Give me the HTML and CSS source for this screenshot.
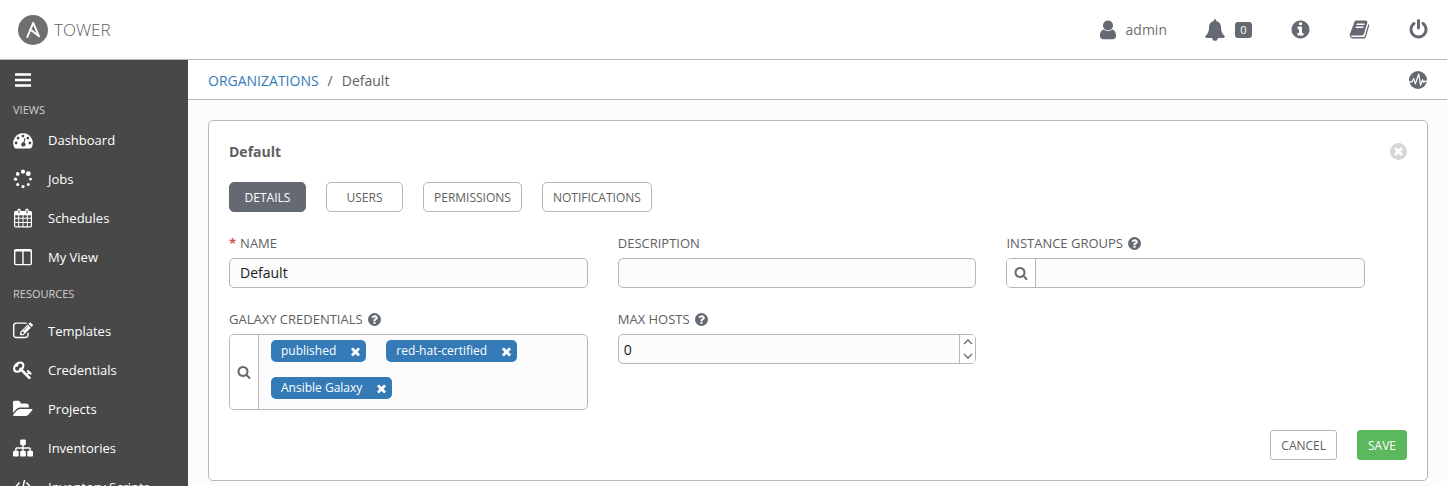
FILE: index.html
```html
<!DOCTYPE html>
<html lang="en">
<head>
<meta charset="utf-8">
<title>Tower - Organizations</title>
<link rel="stylesheet" href="styles.css">
</head>
<body>
<svg class="sprite" aria-hidden="true">
  <symbol id="search" viewBox="0 0 1792 1792"><path d="M1216 832q0-185-131.500-316.500t-316.500-131.500-316.500 131.500-131.500 316.500 131.500 316.500 316.500 131.500 316.500-131.500 131.500-316.500zm512 832q0 52-38 90t-90 38q-54 0-90-38l-343-342q-179 124-399 124-143 0-273.500-55.500t-225-150-150-225-55.500-273.500 55.500-273.500 150-225 225-150 273.500-55.500 273.500 55.500 225 150 150 225 55.500 273.500q0 220-124 399l343 343q37 37 37 90z"/></symbol>
  <symbol id="help" viewBox="0 0 1792 1792"><path d="M1024 1376v-192q0-14-9-23t-23-9h-192q-14 0-23 9t-9 23v192q0 14 9 23t23 9h192q14 0 23-9t9-23zm256-672q0-88-55.500-163t-138.500-116-170-41q-243 0-371 213-15 24 8 42l132 100q7 6 19 6 16 0 25-12 53-68 86-92 34-24 86-24 48 0 85.500 26t37.500 59q0 38-20 61t-68 45q-63 28-115.500 86.500t-52.500 125.500v36q0 14 9 23t23 9h192q14 0 23-9t9-23q0-19 21.500-49.500t54.500-49.500q32-18 49-28.500t46-35 44.500-48 28-60.500 12.500-81zm384 192q0 209-103 385.500t-279.500 279.500-385.500 103-385.500-103-279.500-279.500-103-385.500 103-385.500 279.500-279.500 385.500-103 385.500 103 279.500 279.500 103 385.500z"/></symbol>
  <symbol id="times" viewBox="0 0 1792 1792"><path d="M1490 1322q0 40-28 68l-136 136q-28 28-68 28t-68-28l-294-294-294 294q-28 28-68 28t-68-28l-136-136q-28-28-28-68t28-68l294-294-294-294q-28-28-28-68t28-68l136-136q28-28 68-28t68 28l294 294 294-294q28-28 68-28t68 28l136 136q28 28 28 68t-28 68l-294 294 294 294q28 28 28 68z"/></symbol>
</svg>

<header class="topbar">
  <a class="brand" href="#">
    <svg class="brand-mark" viewBox="0 0 30 30"><circle cx="15" cy="15" r="15" fill="#6f6f6f"/><path d="M9.300 22 15.200 7.800 21 21.300 12 14.300" fill="none" stroke="#fff" stroke-width="1.900" stroke-linejoin="round" stroke-linecap="round"/></svg>
    <span>TOWER</span>
  </a>
  <nav class="tools" aria-label="Account">
    <a class="tool" href="#">
      <svg class="icon-user" viewBox="0 0 16 20"><circle cx="8" cy="5.500" r="5"/><path d="M4 9.600a6.300 6.300 0 0 0 8 0c3 .4 4 3.400 4 6.200 0 2.200-1.200 3.500-3.200 3.500H3.200C1.200 19.300 0 18 0 15.800c0-2.800 1-5.800 4-6.200z"/></svg>
      <span>admin</span>
    </a>
    <button class="tool" type="button" aria-label="Notifications">
      <svg class="icon-bell" viewBox="0 0 20 22"><path d="M10 .3c.8 0 1.300.6 1.200 1.300l-.1.500c3.200.6 4.900 3.100 4.900 6 0 4.700 1.300 7 3.800 9.100 0 1-.6 1.700-1.600 1.700h-5.400a2.800 2.800 0 0 1-5.600 0H1.800c-1 0-1.600-.7-1.600-1.700C2.700 15.100 4 12.800 4 8.100c0-2.900 1.700-5.400 4.900-6l-.1-.5C8.700.9 9.200.3 10 .3z"/></svg>
      <span class="count">0</span>
    </button>
    <a class="tool" href="#" aria-label="About">
      <svg class="icon-21" viewBox="0 0 1792 1792"><path d="M1152 1376v-160q0-14-9-23t-23-9h-96v-512q0-14-9-23t-23-9h-320q-14 0-23 9t-9 23v160q0 14 9 23t23 9h96v320h-96q-14 0-23 9t-9 23v160q0 14 9 23t23 9h448q14 0 23-9t9-23zm-128-896v-160q0-14-9-23t-23-9h-192q-14 0-23 9t-9 23v160q0 14 9 23t23 9h192q14 0 23-9t9-23zm640 416q0 209-103 385.500t-279.500 279.500-385.500 103-385.500-103-279.500-279.500-103-385.500 103-385.500 279.500-279.500 385.500-103 385.500 103 279.500 279.500 103 385.500z"/></svg>
    </a>
    <a class="tool" href="#" aria-label="Documentation">
      <svg class="icon-21" viewBox="0 0 1792 1792"><path d="M1703 478q40 57 18 129l-275 906q-19 64-76.500 107.500t-122.500 43.500h-923q-77 0-148.500-53.500t-99.500-131.500q-24-67-2-127 0-4 3-27t4-37q1-8-3-21.500t-3-19.500q2-11 8-21t16.500-23.500 16.500-23.500q23-38 45-91.500t30-91.500q3-10 .5-30t-.5-28q3-11 17-28t17-23q21-36 42-92t25-90q1-9-2.500-32t.5-28q4-13 22-30.500t22-22.500q19-26 42.500-84.500t27.500-96.500q1-8-3-25.500t-2-26.500q2-8 9-18t18-23 17-21q8-12 16.500-30.500t15-35 16-36 19.500-32 26.500-23.500 36-11.500 47.500 5.500l-1 3q38-9 51-9h761q74 0 114 56t18 130l-274 906q-36 119-71.500 153.500t-128.500 34.500h-869q-27 0-38 15-11 16-1 43 24 70 144 70h923q29 0 56-15.500t35-41.500l300-987q7-22 5-57 38 15 59 43zm-1064 2q-4 13 2 22.500t20 9.500h608q13 0 25.500-9.500t16.500-22.500l21-64q4-13-2-22.500t-20-9.500h-608q-13 0-25.500 9.500t-16.500 22.500zm-83 256q-4 13 2 22.500t20 9.500h608q13 0 25.500-9.500t16.500-22.500l21-64q4-13-2-22.500t-20-9.500h-608q-13 0-25.500 9.500t-16.500 22.500z"/></svg>
    </a>
    <button class="tool" type="button" aria-label="Log out">
      <svg class="icon-21" viewBox="0 0 1792 1792"><path d="M1664 896q0 156-61 298t-164 245-245 164-298 61-298-61-245-164-164-245-61-298q0-182 80.500-343t226.500-270q43-32 95.500-25t83.500 50q32 42 24.500 94.500t-49.500 84.500q-98 74-151.500 181t-53.500 228q0 104 40.500 198.500t109.500 163.500 163.500 109.500 198.500 40.500 198.500-40.500 163.500-109.500 109.500-163.500 40.500-198.500q0-121-53.500-228t-151.500-181q-42-32-49.500-84.500t24.500-94.500q31-43 84-50t95 25q146 109 226.500 270t80.500 343zm-640-768v640q0 52-38 90t-90 38-90-38-38-90v-640q0-52 38-90t90-38 90 38 38 90z"/></svg>
    </button>
  </nav>
</header>

<div class="shell">
  <nav class="sidebar" aria-label="Main">
    <button class="burger" type="button" aria-label="Toggle menu">
      <svg viewBox="0 0 20 20"><path d="M2 4.500h16M2 10h16M2 15.500h16" stroke="#fff" stroke-width="2.600"/></svg>
    </button>
    <h2 class="side-heading side-heading-first">VIEWS</h2>
    <a class="side-link" href="#"><svg viewBox="0 0 20 20"><path fill-rule="evenodd" d="M10 3.300a9.700 9.700 0 0 1 8.300 14.800c-.2.300-.5.500-.9.500H2.600c-.4 0-.7-.2-.9-.5A9.700 9.700 0 0 1 10 3.300zM10 4.700a1.400 1.400 0 1 0 0 2.800 1.400 1.400 0 0 0 0-2.800zM5.100 6.700a1.400 1.400 0 1 0 0 2.800 1.400 1.400 0 0 0 0-2.800zM3.100 11.600a1.400 1.400 0 1 0 0 2.800 1.400 1.400 0 0 0 0-2.800zM14.900 6.700a1.400 1.400 0 1 0 0 2.800 1.400 1.400 0 0 0 0-2.800zM16.900 11.600a1.400 1.400 0 1 0 0 2.800 1.400 1.400 0 0 0 0-2.800zM11.400 8.300l-1 3.900a2.200 2.200 0 1 0 1.100.3l1-3.900z"/></svg>Dashboard</a>
    <a class="side-link" href="#"><svg viewBox="0 0 20 20"><circle cx="10" cy="2.700" r="2.100"/><circle cx="15.300" cy="4.700" r="2.400"/><circle cx="17.500" cy="10.200" r="1.400"/><circle cx="15.300" cy="15.500" r="1.500"/><circle cx="10" cy="17.600" r="1.600"/><circle cx="4.700" cy="15.500" r="1.600"/><circle cx="2.500" cy="10.200" r="1.600"/><circle cx="4.700" cy="4.900" r="1.900"/></svg>Jobs</a>
    <a class="side-link" href="#"><svg viewBox="0 0 20 20"><path fill-rule="evenodd" d="M2.500 3h1.800V2.400C4.300 1.500 5 .8 6 .8s1.800.7 1.800 1.600V3h4.400v-.6c0-.9.8-1.600 1.800-1.600s1.700.7 1.700 1.600V3h1.800c.8 0 1.500.6 1.500 1.400v13.700c0 .8-.7 1.400-1.500 1.400h-15c-.8 0-1.500-.6-1.500-1.400V4.400C1 3.600 1.700 3 2.500 3zM5.500 2.200v3h1v-3zM13.500 2.200v3h1v-3zM2.200 7.200v2.600h3V7.200zM6.200 7.200v2.600h3.300V7.200zM10.500 7.200v2.600h3.300V7.200zM14.800 7.200v2.600h3V7.200zM2.200 10.800V14h3v-3.200zM6.200 10.800V14h3.300v-3.200zM10.500 10.800V14h3.300v-3.200zM14.800 10.800V14h3v-3.200zM2.200 15v3.200h3V15zM6.200 15v3.200h3.300V15zM10.500 15v3.200h3.300V15zM14.800 15v3.200h3V15z"/></svg>Schedules</a>
    <a class="side-link" href="#"><svg viewBox="0 0 20 20"><path fill-rule="evenodd" d="M2.800 2h14.400c1 0 1.800.8 1.800 1.700v12.900c0 1-.8 1.700-1.800 1.700H2.800c-1 0-1.800-.7-1.800-1.700V3.700C1 2.800 1.800 2 2.800 2zM2.400 4.500v12.400h6.900V4.500zM10.700 4.500v12.400h6.900V4.500z"/></svg>My View</a>
    <h2 class="side-heading">RESOURCES</h2>
    <a class="side-link" href="#"><svg viewBox="0 0 1792 1792"><path d="M888 1184l116-116-152-152-116 116v56h96v96h56zm440-720q-16-16-33 1l-350 350q-17 17-1 33t33-1l350-350q17-17 1-33zm80 594v190q0 119-84.500 203.500t-203.500 84.500h-832q-119 0-203.500-84.500t-84.500-203.500v-832q0-119 84.500-203.500t203.500-84.500h832q63 0 117 25 15 7 18 23 3 17-9 29l-49 49q-14 14-32 8-23-6-45-6h-832q-66 0-113 47t-47 113v832q0 66 47 113t113 47h832q66 0 113-47t47-113v-126q0-13 9-22l64-64q15-15 35-7t20 29zm-96-738l288 288-672 672h-288v-288zm444 132l-92 92-288-288 92-92q28-28 68-28t68 28l152 152q28 28 28 68t-28 68z"/></svg>Templates</a>
    <a class="side-link" href="#"><svg viewBox="0 0 1792 1792"><path d="M832 512q0-80-56-136t-136-56-136 56-56 136q0 42 19 83-41-19-83-19-80 0-136 56t-56 136 56 136 136 56 136-56 56-136q0-42-19-83 41 19 83 19 80 0 136-56t56-136zm851 704q0 17-49 66t-66 49q-9 0-28.500-16t-36.500-33-38.500-40-24.500-26l-96 96 220 220q28 28 28 68 0 42-39 81t-81 39q-40 0-68-28l-671-671q-176 131-365 131-163 0-265.500-102.500t-102.500-265.500q0-160 95-313t248-248 313-95q163 0 265.500 102.500t102.500 265.500q0 189-131 365l355 355 96-96q-3-3-26-24.500t-40-38.500-33-36.500-16-28.500q0-17 49-66t66-49q13 0 23 10 6 6 46 44.500t82 79.500 86.500 86 73 78 28.500 41z"/></svg>Credentials</a>
    <a class="side-link" href="#"><svg viewBox="0 0 1856 1792"><path d="M1815 952q0 31-31 66l-336 396q-43 51-120.500 86.500t-143.500 35.500h-1088q-34 0-60.500-13t-26.500-43q0-31 31-66l336-396q43-51 120.500-86.500t143.500-35.500h1088q34 0 60.500 13t26.500 43zm-343-344v160h-832q-94 0-197 47.500t-164 119.500l-337 396-5 6q0-4-.5-12.500t-.5-12.500v-960q0-92 66-158t158-66h320q92 0 158 66t66 158v32h544q92 0 158 66t66 158z"/></svg>Projects</a>
    <a class="side-link" href="#"><svg viewBox="0 0 1792 1792"><path d="M1792 1248v320q0 40-28 68t-68 28h-320q-40 0-68-28t-28-68v-320q0-40 28-68t68-28h96v-192h-512v192h96q40 0 68 28t28 68v320q0 40-28 68t-68 28h-320q-40 0-68-28t-28-68v-320q0-40 28-68t68-28h96v-192h-512v192h96q40 0 68 28t28 68v320q0 40-28 68t-68 28h-320q-40 0-68-28t-28-68v-320q0-40 28-68t68-28h96v-192q0-52 38-90t90-38h512v-192h-96q-40 0-68-28t-28-68v-320q0-40 28-68t68-28h320q40 0 68 28t28 68v320q0 40-28 68t-68 28h-96v192h512q52 0 90 38t38 90v192h96q40 0 68 28t28 68z"/></svg>Inventories</a>
    <a class="side-link" href="#"><svg viewBox="0 0 20 20"><path d="M6.500 5.500 2.500 10l4 4.500M13.500 5.500l4 4.500-4 4.500M11.600 3 8.400 17" fill="none" stroke="#fff" stroke-width="1.500"/></svg>Inventory Scripts</a>
  </nav>

  <main class="content">
    <div class="crumbs">
      <nav class="trail" aria-label="Breadcrumb"><a href="#">ORGANIZATIONS</a><span>/</span><span>Default</span></nav>
      <button class="activity" type="button" aria-label="Activity stream">
        <svg viewBox="0 0 18 18"><circle cx="9" cy="9" r="9"/><path d="M0 10.800h3l1.700-3.300 1.600 5.300L9.800 3l1.700 11.200 2-5.400 1.300 2.600 1-1.200H18" fill="none" stroke="#fff" stroke-width="1.200" stroke-linejoin="round"/></svg>
      </button>
    </div>

    <section class="panel">
      <div class="panel-head">
        <h1>Default</h1>
        <button class="close" type="button" aria-label="Close">
          <svg viewBox="128 128 1536 1536"><path d="M1277 1122q0-26-19-45l-181-181 181-181q19-19 19-45 0-27-19-46l-90-90q-19-19-46-19-26 0-45 19l-181 181-181-181q-19-19-45-19-27 0-46 19l-90 90q-19 19-19 46 0 26 19 45l181 181-181 181q-19 19-19 45 0 27 19 46l90 90q19 19 46 19 26 0 45-19l181-181 181 181q19 19 45 19 27 0 46-19l90-90q19-19 19-46zm387-226q0 209-103 385.500t-279.500 279.500-385.500 103-385.500-103-279.500-279.500-103-385.500 103-385.500 279.500-279.500 385.500-103 385.500 103 279.500 279.500 103 385.500z"/></svg>
        </button>
      </div>
      <div class="tabs">
        <button class="btn tab tab-active" type="button">DETAILS</button>
        <button class="btn tab" type="button">USERS</button>
        <button class="btn tab" type="button">PERMISSIONS</button>
        <button class="btn tab" type="button">NOTIFICATIONS</button>
      </div>
      <form>
        <div class="fields">
          <div class="field">
            <label for="name"><span class="required">*</span>NAME</label>
            <input class="box text" id="name" type="text" value="Default">
          </div>
          <div class="field">
            <label for="description">DESCRIPTION</label>
            <input class="box text" id="description" type="text">
          </div>
          <div class="field">
            <label for="groups">INSTANCE GROUPS<svg class="help"><use href="#help"/></svg></label>
            <div class="box lookup">
              <button class="lookup-btn" type="button" aria-label="Search instance groups"><svg><use href="#search"/></svg></button>
              <input class="bare" id="groups" type="text">
            </div>
          </div>
          <div class="field">
            <label id="galaxy-label">GALAXY CREDENTIALS<svg class="help"><use href="#help"/></svg></label>
            <div class="box lookup" role="group" aria-labelledby="galaxy-label">
              <button class="lookup-btn" type="button" aria-label="Search credentials"><svg><use href="#search"/></svg></button>
              <div class="tags">
                <span class="tag">published<button type="button" aria-label="Remove published"><svg><use href="#times"/></svg></button></span>
                <span class="tag">red-hat-certified<button type="button" aria-label="Remove red-hat-certified"><svg><use href="#times"/></svg></button></span>
                <span class="tag">Ansible Galaxy<button type="button" aria-label="Remove Ansible Galaxy"><svg><use href="#times"/></svg></button></span>
              </div>
            </div>
          </div>
          <div class="field">
            <label for="hosts">MAX HOSTS<svg class="help"><use href="#help"/></svg></label>
            <div class="box lookup">
              <input class="bare number" id="hosts" type="number" value="0">
              <div class="spinner">
                <button type="button" aria-label="Increase"><svg viewBox="0 0 10 6"><path d="M1 5l4-4 4 4"/></svg></button>
                <button type="button" aria-label="Decrease"><svg viewBox="0 0 10 6"><path d="M1 1l4 4 4-4"/></svg></button>
              </div>
            </div>
          </div>
        </div>
        <div class="actions">
          <button class="btn action" type="button">CANCEL</button>
          <button class="btn action save" type="submit">SAVE</button>
        </div>
      </form>
    </section>
  </main>
</div>
</body>
</html>
```

FILE: styles.css
```css
* {
  box-sizing: border-box;
}

body {
  margin: 0;
  height: 100vh;
  display: flex;
  flex-direction: column;
  overflow: hidden;
  background: #fcfcfc;
  color: #606060;
  font: 14px/20px "Open Sans", "Noto Sans", sans-serif;
}

button,
input {
  margin: 0;
  padding: 0;
  border: 0;
  background: none;
  color: inherit;
  font: inherit;
}

a {
  color: inherit;
  text-decoration: none;
}

svg {
  display: block;
  flex: none;
  fill: currentColor;
}

.sprite {
  position: absolute;
  width: 0;
  height: 0;
}

/* Top bar */
.topbar {
  flex: none;
  display: flex;
  justify-content: space-between;
  align-items: center;
  height: 60px;
  padding: 0 18px;
  border-bottom: 1px solid #b7b7b7;
  background: #fff;
}

.brand {
  display: flex;
  align-items: center;
  gap: 6px;
  color: #606060;
  font-size: 17px;
  font-weight: 300;
}

.brand-mark {
  width: 30px;
  height: 30px;
}

.tools {
  display: flex;
  align-items: center;
  gap: 38px;
}

.tool {
  display: flex;
  align-items: center;
  gap: 10px;
  color: #646972;
}

.tool span {
  color: #707070;
}

.icon-user {
  width: 16px;
  height: 20px;
}

.icon-bell {
  width: 20px;
  height: 22px;
}

.icon-21 {
  width: 21px;
  height: 21px;
}

.tool .count {
  width: 17px;
  border-radius: 3px;
  background: #646972;
  color: #fff;
  font-size: 11px;
  line-height: 16px;
  text-align: center;
}

/* Sidebar */
.shell {
  flex: 1;
  display: flex;
  min-height: 0;
}

.sidebar {
  flex: none;
  width: 188px;
  overflow: hidden;
  background: #484848;
  color: #fff;
}

.burger {
  display: flex;
  align-items: center;
  height: 40px;
  padding: 0 13px;
}

.burger svg,
.side-link svg {
  width: 20px;
  height: 20px;
}

.side-heading {
  margin: 0;
  padding-left: 13px;
  color: #d0d0d0;
  font-size: 11px;
  font-weight: 400;
  line-height: 35px;
}

.side-heading-first {
  line-height: 20px;
}

.side-link {
  display: flex;
  align-items: center;
  gap: 15px;
  height: 39px;
  padding-left: 13px;
  font-size: 13px;
}

/* Breadcrumb */
.content {
  flex: 1;
  min-width: 0;
}

.crumbs {
  display: flex;
  justify-content: space-between;
  align-items: center;
  height: 40px;
  padding: 0 20px;
  border-bottom: 1px solid #b7b7b7;
  background: #fff;
}

.trail {
  display: flex;
  gap: 9px;
  padding-top: 2px;
}

.trail a {
  color: #337ab7;
}

.activity {
  color: #646972;
}

.activity svg {
  width: 18px;
  height: 18px;
}

/* Panel */
.panel {
  margin: 20px 19px 20px 20px;
  padding: 20px;
  border: 1px solid #b7b7b7;
  border-radius: 5px;
  background: #fff;
}

.panel-head {
  display: flex;
  justify-content: space-between;
  align-items: center;
  height: 21px;
}

.panel-head h1 {
  margin: 0;
  font-size: 14px;
  font-weight: 700;
}

.close {
  color: #d7d7d7;
}

.close svg {
  width: 17px;
  height: 17px;
}

.tabs {
  display: flex;
  gap: 20px;
  margin: 20px 0;
}

.btn {
  height: 30px;
  padding: 2px 10px 0;
  border: 1px solid #b7b7b7;
  background: #fff;
  font-size: 12px;
}

.tab {
  min-width: 77px;
  border-radius: 5px;
}

.tab-active {
  border-color: #646972;
  background: #646972;
  color: #fff;
}

/* Form */
.fields {
  display: grid;
  grid-template-columns: repeat(3, 33%);
  align-items: start;
  row-gap: 20px;
}

.field {
  padding-right: 30px;
}

.field label {
  display: flex;
  align-items: center;
  margin-bottom: 4px;
  font-size: 13px;
  line-height: 22px;
}

.required {
  margin-right: 4px;
  color: #d9534f;
  font-weight: 700;
}

.help {
  width: 15px;
  height: 15px;
  margin-left: 4px;
  color: #646972;
}

.box {
  width: 100%;
  min-height: 30px;
  border: 1px solid #b7b7b7;
  border-radius: 5px;
  background: #fcfcfc;
}

.text {
  display: block;
  padding: 0 10px;
  color: #161b1f;
}

.lookup {
  display: flex;
  overflow: hidden;
}

.lookup-btn {
  display: flex;
  align-items: center;
  justify-content: center;
  width: 29px;
  border-right: 1px solid #b7b7b7;
  background: #fff;
  color: #646972;
}

.lookup-btn svg {
  width: 14px;
  height: 14px;
}

.bare {
  flex: 1;
  min-width: 0;
  height: 28px;
  padding: 0 5px;
  color: #161b1f;
}

.number {
  appearance: textfield;
}

.spinner {
  display: flex;
  flex-direction: column;
  width: 16px;
  border-left: 1px solid #b7b7b7;
  background: #fff;
}

.spinner button {
  flex: 1;
  display: flex;
  align-items: center;
  justify-content: center;
}

.spinner svg {
  width: 10px;
  height: 6px;
  fill: none;
  stroke: #646972;
  stroke-width: 1.3;
}

.tags {
  flex: 1;
  display: flex;
  flex-wrap: wrap;
  gap: 15px 20px;
  padding: 5px 12px 10px;
}

.tag {
  display: flex;
  align-items: center;
  gap: 13px;
  height: 22px;
  padding: 0 4px 0 10px;
  border-radius: 5px;
  background: #337ab7;
  color: #fff;
  font-size: 12px;
  line-height: 24px;
}

.tag svg {
  width: 13px;
  height: 13px;
}

.actions {
  display: flex;
  justify-content: flex-end;
  gap: 20px;
  margin-top: 20px;
}

.action {
  border-radius: 3px;
}

.save {
  border-color: #5cb85c;
  background: #5cb85c;
  color: #fff;
}
```
